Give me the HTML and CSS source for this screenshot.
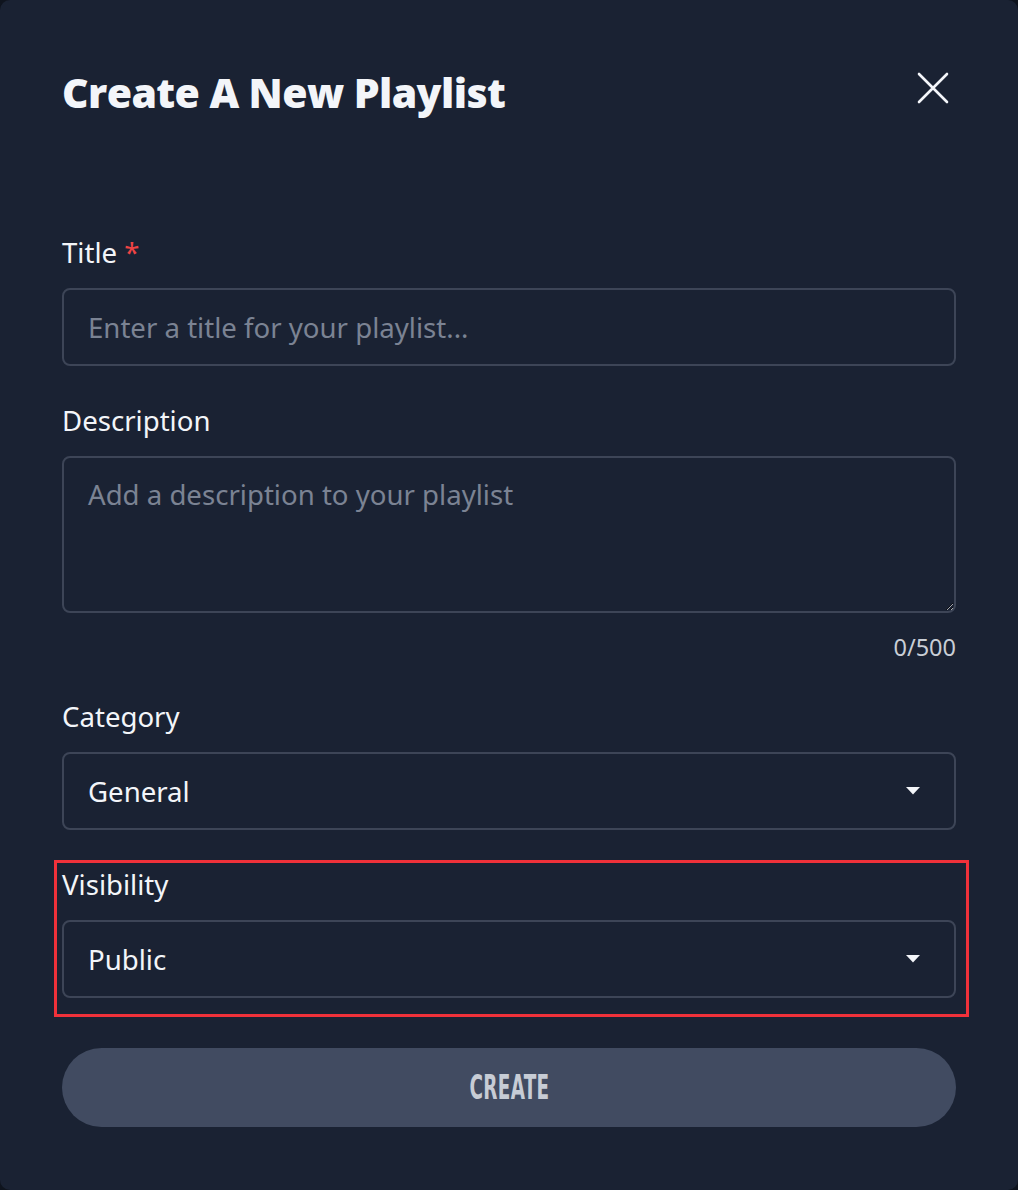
FILE: index.html
```html
<!DOCTYPE html>
<html lang="en">
<head>
<meta charset="utf-8">
<title>Create A New Playlist</title>
<link rel="stylesheet" href="styles.css">
</head>
<body>
<div class="dialog">
  <header class="dialog-header">
    <h1 class="dialog-title">Create A New Playlist</h1>
    <button class="close-btn" aria-label="Close">
      <svg width="34" height="34" viewBox="0 0 34 34"><path d="M3 3 L31 31 M31 3 L3 31" stroke="#f4f6fa" stroke-width="2.6" stroke-linecap="round" fill="none"/></svg>
    </button>
  </header>
  <form class="form">
    <div class="field">
      <label class="label">Title <span class="req">*</span></label>
      <input class="input" type="text" placeholder="Enter a title for your playlist...">
    </div>
    <div class="field">
      <label class="label">Description</label>
      <textarea class="input textarea" placeholder="Add a description to your playlist"></textarea>
      <div class="counter">0/500</div>
    </div>
    <div class="field">
      <label class="label">Category</label>
      <div class="input select">
        <span>General</span>
        <svg class="caret" width="14" height="8" viewBox="0 0 14 8"><path d="M0 0 H14 L7 7.5 Z" fill="#f4f6fa"/></svg>
      </div>
    </div>
    <div class="field field-highlight">
      <label class="label">Visibility</label>
      <div class="input select">
        <span>Public</span>
        <svg class="caret" width="14" height="8" viewBox="0 0 14 8"><path d="M0 0 H14 L7 7.5 Z" fill="#f4f6fa"/></svg>
      </div>
    </div>
    <button type="button" class="create-btn"><span>CREATE</span></button>
  </form>
</div>
</body>
</html>
```
FILE: styles.css
```css
* { box-sizing: border-box; }
html, body { margin: 0; padding: 0; background: #0f141e; }
body { font-family: "Noto Sans", "Open Sans", sans-serif; }
.dialog {
  width: 1018px;
  height: 1190px;
  background: #1a2233;
  border-radius: 10px;
  padding: 68px 62px 0 62px;
}
.dialog-header {
  display: flex;
  justify-content: space-between;
  align-items: center;
  height: 48px;
}
.dialog-title {
  margin: 0;
  font-family: "Open Sans", sans-serif;
  font-weight: 800;
  font-size: 41px;
  line-height: 48px;
  color: #f3f5f9;
  letter-spacing: -0.6px;
}
.close-btn {
  background: none;
  border: 0;
  padding: 0;
  margin-right: 6px;
  margin-top: -8px;
  width: 34px;
  height: 34px;
  display: flex;
}
.form {
  margin-top: 118px;
  display: flex;
  flex-direction: column;
  gap: 36px;
}
.field { display: flex; flex-direction: column; position: relative; }
.label {
  font-size: 27.6px;
  line-height: 36px;
  color: #f3f5f9;
  margin-bottom: 18px;
}
.req { color: #ef4444; }
.input {
  width: 100%;
  height: 78px;
  background: #1a2233;
  border: 2px solid #3d4557;
  border-radius: 8px;
  padding: 0 24px;
  font-family: "Noto Sans", "Open Sans", sans-serif;
  font-size: 27.6px;
  color: #f3f5f9;
  outline: none;
}
.input::placeholder { color: #7b8393; }
.textarea {
  height: 157px;
  padding: 16px 24px;
  resize: vertical;
  line-height: 40px;
}
.counter {
  text-align: right;
  font-size: 23.5px;
  line-height: 30px;
  color: #c9ced6;
  margin-top: 19px;
}
.select {
  display: flex;
  align-items: center;
  justify-content: space-between;
  padding-right: 34px;
}
.caret { display: block; }
.field-highlight::after {
  content: "";
  position: absolute;
  left: -8px;
  right: -13px;
  top: -6px;
  bottom: -19px;
  border: 3px solid #f0313a;
  pointer-events: none;
}
.create-btn {
  margin-top: 14px;
  height: 79px;
  border: 0;
  border-radius: 40px;
  background: #414b61;
  display: flex;
  align-items: center;
  justify-content: center;
}
.create-btn span {
  display: inline-block;
  font-family: "DejaVu Sans Condensed", "DejaVu Sans", sans-serif;
  font-weight: bold;
  font-size: 33px;
  color: #c7ccd5;
  transform: scaleX(0.62);
  letter-spacing: 0.5px;
}
```
